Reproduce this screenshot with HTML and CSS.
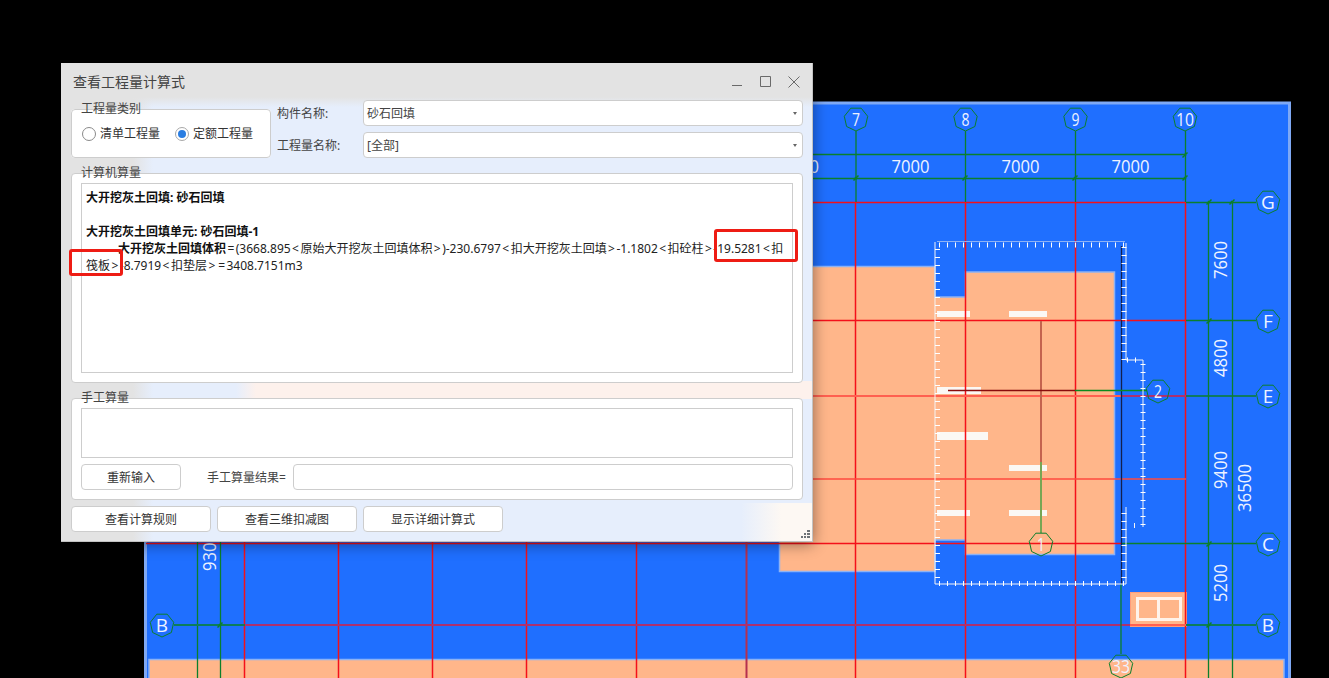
FILE: index.html
```html
<!DOCTYPE html>
<html lang="zh-CN">
<head>
<meta charset="utf-8">
<title>查看工程量计算式</title>
<link rel="stylesheet" href="styles.css">
</head>
<body>
<svg class="cad" width="1329" height="678" viewBox="0 0 1329 678" xmlns="http://www.w3.org/2000/svg">
  <defs>
    <polygon id="hept" points="0,12 -9.4,7.5 -11.7,-2.7 -5.2,-10.8 5.2,-10.8 11.7,-2.7 9.4,7.5"/>
    <path id="tick" d="M-2.5 2.5 L2.5 -2.5 M-1 -1 L1 1"/>
  </defs>
  <rect class="panel" x="145.500" y="103" width="1144" height="580"/>
  <path class="peach" d="M779.500 266.500 V571.500 H935 V540 H965.500 V554.500 H1114.500 V272 H965.500 V297 H935 V266.500 Z"/>
  <rect class="peach" x="149" y="659.500" width="1135" height="24"/>
  <rect class="peach plain" x="1130.500" y="592.500" width="56" height="34"/>
  <rect class="white-outline" x="1137.500" y="598.500" width="43" height="21"/>
  <line class="white-thick" x1="1158.500" y1="598" x2="1158.500" y2="620"/>

  <rect class="wbar" x="937" y="311" width="33" height="6"/>
  <rect class="wbar" x="1009" y="311" width="38" height="6"/>
  <rect class="wbar" x="937" y="387" width="44" height="7"/>
  <rect class="wbar" x="937" y="432" width="51" height="8"/>
  <rect class="wbar" x="1009" y="465" width="38" height="6"/>
  <rect class="wbar" x="937" y="510" width="33" height="6"/>
  <rect class="wbar" x="1009" y="510" width="38" height="6"/>

  <!-- red grid -->
  <g class="red">
    <path d="M244.500 542V678 M338.500 542V678 M432.500 542V678 M526.500 542V678 M636.500 542V678"/>
    <path d="M855.500 202V678 M965.500 202V678 M1075.500 202V678 M1185.500 202V678"/>
    <path d="M146 202.500H1185 M146 320.500H1185 M146 543.500H1121"/>
  </g>
  <line class="red-soft" x1="746.500" y1="542" x2="746.500" y2="678"/>
  <line class="red-band" x1="146" y1="396" x2="1122" y2="396"/>
  <line class="purple" x1="1122" y1="396" x2="1186" y2="396"/>
  <line class="red-mid" x1="146" y1="479" x2="1186" y2="479"/>
  <line class="purple" x1="245" y1="625" x2="1186" y2="625"/>
  <line class="red-band" x1="1130" y1="625" x2="1186" y2="625"/>

  <!-- green dimension lines -->
  <g class="green">
    <path d="M856 131V202 M965.500 131V202 M1075.500 131V202 M1185.500 131V202"/>
    <path d="M813 154.500H1186 M813 178.500H1186"/>
    <path d="M1186 202.500H1256 M1186 320.500H1256 M1186 396H1256 M1121 543.500H1256"/>
    <path d="M1208.500 202V678 M1232.500 202V678"/>
    <path d="M197.500 542V678 M220.500 542V678"/>
    <path d="M1121 584V654"/>
  </g>
  <line class="green-thick" x1="1186" y1="625" x2="1256" y2="625"/>
  <line class="green-thick" x1="174" y1="625" x2="245" y2="625"/>
  <line class="dark" x1="1121.500" y1="246" x2="1121.500" y2="584"/>
  <line class="brown" x1="1041" y1="321" x2="1041" y2="462"/>
  <line class="olive" x1="1041" y1="462" x2="1041" y2="533"/>
  <line class="maroon" x1="948" y1="390.500" x2="1075" y2="390.500"/>
  <line class="green-line" x1="1075" y1="390.500" x2="1147" y2="390.500"/>

  <g class="mark">
    <use href="#tick" x="856" y="178"/><use href="#tick" x="965" y="178"/><use href="#tick" x="1075" y="178"/>
    <use href="#tick" x="1185" y="155"/><use href="#tick" x="1185" y="178"/>
    <use href="#tick" x="1209" y="202"/><use href="#tick" x="1232" y="202"/>
    <use href="#tick" x="1209" y="321"/><use href="#tick" x="1209" y="544"/><use href="#tick" x="1209" y="625"/>
    <use href="#tick" x="220" y="625"/>
  </g>

  <!-- pit outline -->
  <g class="hatch-line">
    <path d="M935 242V584 H1126 M1126 507V584 M1126 243V360 H1143 V527 M1134.500 523V528"/>
  </g>
  <path class="hatch-top" d="M937 241.500H1125"/>
  <g class="hatch">
    <path d="M937.500 249V582"/>
    <path d="M1124 247V360"/>
    <path d="M1124 513V582"/>
    <path d="M1143 364V526"/>
  </g>
  <g class="hatch-v">
    <path d="M939 245H1125"/>
    <path d="M939 583.500H1125"/>
    <path d="M1127 360H1143"/>
  </g>

  <!-- axis bubbles -->
  <g class="bubble">
    <use href="#hept" x="856" y="119"/><use href="#hept" x="965.500" y="119"/><use href="#hept" x="1075.500" y="119"/><use href="#hept" x="1185" y="119"/>
    <use href="#hept" x="1268" y="202"/><use href="#hept" x="1268" y="321"/><use href="#hept" x="1268" y="396"/><use href="#hept" x="1268" y="544"/><use href="#hept" x="1268" y="625"/>
    <use href="#hept" x="162" y="625"/><use href="#hept" x="1041" y="544"/><use href="#hept" x="1158" y="391"/><use href="#hept" x="1121" y="666"/>
  </g>
  <g class="label">
    <text x="856" y="126" textLength="8" lengthAdjust="spacingAndGlyphs">7</text>
    <text x="965.500" y="126" textLength="8" lengthAdjust="spacingAndGlyphs">8</text>
    <text x="1075.500" y="126" textLength="8" lengthAdjust="spacingAndGlyphs">9</text>
    <text x="1185" y="126" textLength="18" lengthAdjust="spacingAndGlyphs">10</text>
    <text x="1268" y="209">G</text><text x="1268" y="328">F</text><text x="1268" y="403">E</text><text x="1268" y="551">C</text><text x="1268" y="632">B</text>
    <text x="162" y="632">B</text>
    <text x="1041" y="551" textLength="8" lengthAdjust="spacingAndGlyphs">1</text>
    <text x="1158" y="398" textLength="8" lengthAdjust="spacingAndGlyphs">2</text>
    <text x="1121" y="673" textLength="18" lengthAdjust="spacingAndGlyphs">33</text>
    <text x="800" y="173" textLength="38" lengthAdjust="spacingAndGlyphs">7000</text>
    <text x="910.500" y="173" textLength="38" lengthAdjust="spacingAndGlyphs">7000</text>
    <text x="1020.500" y="173" textLength="38" lengthAdjust="spacingAndGlyphs">7000</text>
    <text x="1130.500" y="173" textLength="38" lengthAdjust="spacingAndGlyphs">7000</text>
    <text transform="translate(1227 260) rotate(-90)" textLength="38" lengthAdjust="spacingAndGlyphs">7600</text>
    <text transform="translate(1227 358) rotate(-90)" textLength="38" lengthAdjust="spacingAndGlyphs">4800</text>
    <text transform="translate(1227 470) rotate(-90)" textLength="38" lengthAdjust="spacingAndGlyphs">9400</text>
    <text transform="translate(1227 583) rotate(-90)" textLength="38" lengthAdjust="spacingAndGlyphs">5200</text>
    <text transform="translate(1251 488) rotate(-90)" textLength="48" lengthAdjust="spacingAndGlyphs">36500</text>
    <text transform="translate(216 552) rotate(-90)" textLength="38" lengthAdjust="spacingAndGlyphs">9300</text>
  </g>
</svg>

<main class="dialog">
  <header class="titlebar">
    <h1 class="title">查看工程量计算式</h1>
    <div class="winctl">
      <svg width="11" height="11" viewBox="0 0 11 11"><path d="M0 9.500H10"/></svg>
      <svg width="11" height="11" viewBox="0 0 11 11"><path d="M.5 .5H10.500V10.500H.5Z"/></svg>
      <svg width="12" height="12" viewBox="0 0 12 12"><path d="M.5 .5L11.500 11.500M11.500 .5L.5 11.500"/></svg>
    </div>
  </header>

  <section class="top-row">
    <fieldset class="group group-type">
      <span class="legend">工程量类别</span>
      <label class="radio"><span class="dot"></span>清单工程量</label>
      <label class="radio"><span class="dot on"></span>定额工程量</label>
    </fieldset>
    <div class="fields">
      <div class="field"><span class="field-label">构件名称:</span><div class="combo">砂石回填<span class="arrow"></span></div></div>
      <div class="field"><span class="field-label">工程量名称:</span><div class="combo">[全部]<span class="arrow"></span></div></div>
    </div>
  </section>

  <section class="group group-calc">
    <span class="legend">计算机算量</span>
    <div class="memo calc-text">
      <div class="b">大开挖灰土回填: 砂石回填</div>
      <div class="blank"></div>
      <div class="b">大开挖灰土回填单元: 砂石回填-1</div>
      <div class="indent"><span class="b">大开挖灰土回填体积</span><span class="op">=</span>(3668.895<span class="op">&lt;</span>原始大开挖灰土回填体积<span class="op">&gt;</span>)-230.6797<span class="op">&lt;</span>扣大开挖灰土回填<span class="op">&gt;</span>-1.1802<span class="op">&lt;</span>扣砼柱<span class="op">&gt;</span>-19.5281<span class="op">&lt;</span>扣</div>
      <div>筏板<span class="op">&gt;</span>-8.7919<span class="op">&lt;</span>扣垫层<span class="op">&gt;</span><span class="op">=</span>3408.7151m3</div>
    </div>
  </section>

  <section class="group group-manual">
    <span class="legend">手工算量</span>
    <div class="memo manual-memo"></div>
    <div class="manual-row">
      <button class="btn btn-retype">重新输入</button>
      <span class="result-label">手工算量结果=</span>
      <div class="result-input"></div>
    </div>
  </section>

  <footer class="actions">
    <button class="btn btn-wide">查看计算规则</button>
    <button class="btn btn-wide">查看三维扣减图</button>
    <button class="btn btn-wide">显示详细计算式</button>
  </footer>

  <svg class="grip" width="9" height="9" viewBox="0 0 9 9"><path d="M6 0h3v2H6zM3 3h2v2H3zM6 3h3v2H6zM0 6h2v2H0zM3 6h2v2H3zM6 6h3v2H6z"/></svg>
  <span class="callout callout-a"></span>
  <span class="callout callout-b"></span>
</main>
</body>
</html>
```
FILE: styles.css
```css
html, body { margin: 0; padding: 0; }
body {
  position: relative;
  width: 1329px;
  height: 678px;
  overflow: hidden;
  background: #000;
  font-family: "Noto Sans", "Noto Sans CJK SC", sans-serif;
}

/* CAD drawing */
.cad { position: absolute; left: 0; top: 0; display: block; }
.panel { fill: #1f6fff; stroke: #7fa9f5; stroke-width: 3; }
.peach { fill: #ffb68a; stroke: #8db2f5; stroke-width: 1.5; }
.peach.plain { stroke: #ff9d7a; stroke-width: 1; }
.white-outline { fill: none; stroke: #fff3ea; stroke-width: 3; }
.white-thick { stroke: #fff3ea; stroke-width: 3; }
.wbar { fill: #fbf8f4; }
.red path { fill: none; stroke: #f4101a; stroke-width: 1.5; }
.red-soft { stroke: #b5304f; stroke-width: 2; }
.red-band { stroke: #ff6050; stroke-width: 2; }
.red-mid { stroke: #ff4a3e; stroke-width: 1.5; }
.purple { stroke: #ad3070; stroke-width: 2; }
.green path { fill: none; stroke: #0b7f2c; stroke-width: 1.3; }
.green-thick { stroke: #0c7d5a; stroke-width: 2; }
.green-line { stroke: #0b8a1e; stroke-width: 1.3; }
.dark { stroke: #13204d; stroke-width: 1.3; }
.brown { stroke: #c4634e; stroke-width: 2; }
.olive { stroke: #77a654; stroke-width: 2; }
.maroon { stroke: #8a0c0c; stroke-width: 1.3; }
.mark { fill: none; stroke: #0b7f2c; stroke-width: 1.5; }
.bubble { fill: none; stroke: #0b7f2c; stroke-width: 1; }
.hatch-line path { fill: none; stroke: #f4f4f4; stroke-width: 1; }
.hatch-top { fill: none; stroke: #8db2f5; stroke-width: 1; }
.hatch path { fill: none; stroke: #fff; stroke-width: 5; stroke-dasharray: 1 7; }
.hatch-v path { fill: none; stroke: #fff; stroke-width: 5; stroke-dasharray: 1 7; }
.label { fill: #eef3ff; font-family: "Open Sans", "Noto Sans", sans-serif; font-size: 19px; text-anchor: middle; }

/* Dialog */
.dialog {
  position: absolute;
  left: 61px;
  top: 63px;
  box-sizing: border-box;
  width: 752px;
  height: 479px;
  padding: 0 10px;
  display: flex;
  flex-direction: column;
  color: #333;
  font-size: 12px;
  line-height: 17px;
  box-shadow: inset -1px -1px 0 #c2c2c2, 0 2px 14px rgba(0, 0, 0, .45);
  background:
    linear-gradient(180deg, #e3e3e3 0, #e3e3e3 34px, rgba(227,227,227,0) 44px),
    linear-gradient(90deg, #e3e3e3 0, #e3e3e3 72px, rgba(227,227,227,0) 92px),
    linear-gradient(90deg, rgba(253,241,236,0) 175px, #fdf1ec 195px) 0 318px / 100% 18px no-repeat,
    linear-gradient(90deg, rgba(255,250,245,0) 680px, #fdf8f3 720px) 0 440px / 100% 39px no-repeat,
    #e6eefc;
}
.titlebar {
  flex: 0 0 37px;
  height: 37px;
  display: flex;
  justify-content: space-between;
  align-items: flex-start;
  padding: 10px 3px 0 2px;
  box-sizing: border-box;
}
.title { margin: 0; font-size: 14px; font-weight: 400; line-height: 17px; color: #444; }
.winctl { display: flex; gap: 17px; align-items: flex-start; margin-top: 3px; }
.winctl svg { display: block; fill: none; stroke: #6a6a6a; stroke-width: 1; }

.top-row { display: flex; flex: 0 0 58px; gap: 6px; }
.group {
  position: relative;
  margin: 0;
  box-sizing: border-box;
  background: #fff;
  border: 1px solid #cdcdcd;
  border-radius: 4px;
}
.legend {
  position: absolute;
  left: 9px;
  top: -8px;
  color: #444;
  line-height: 14px;
}
.group-type {
  flex: 0 0 200px;
  height: 49px;
  margin-top: 9px;
  min-width: 0;
  padding: 15px 0 0 10px;
  display: flex;
  gap: 15px;
  align-items: flex-start;
}
.radio { display: flex; align-items: center; gap: 4px; height: 17px; color: #333; }
.dot {
  box-sizing: border-box;
  width: 14px;
  height: 14px;
  border: 1px solid #8a8a8a;
  border-radius: 50%;
  background: #fff;
  display: flex;
  align-items: center;
  justify-content: center;
}
.dot.on { border-color: #a8a8a8; }
.dot.on::after { content: ""; width: 8px; height: 8px; border-radius: 50%; background: #2a7de1; }
.fields { flex: 1; display: flex; flex-direction: column; gap: 6px; }
.field { display: flex; height: 26px; align-items: center; }
.field-label { flex: 0 0 86px; color: #444; }
.combo {
  flex: 1;
  height: 26px;
  box-sizing: border-box;
  background: #fff;
  border: 1px solid #cdcdcd;
  border-radius: 4px;
  padding: 4px 0 0 3px;
  color: #444;
  position: relative;
}
.arrow {
  position: absolute;
  right: 5px;
  top: 11px;
  width: 0;
  height: 0;
  border-left: 2.5px solid transparent;
  border-right: 2.5px solid transparent;
  border-top: 3px solid #666;
}

.group-calc { flex: 0 0 210px; margin-top: 15px; padding: 9px; }
.memo { box-sizing: border-box; background: #fff; border: 1px solid #cdcdcd; }
.calc-text {
  height: 190px;
  padding: 5px 0 0 4px;
  white-space: nowrap;
  color: #222;
  overflow: hidden;
}
.b { font-weight: 700; color: #111; }
.blank { height: 17px; }
.indent { padding-left: 32px; }
.op { padding: 0 1.45px; }

.group-manual { flex: 0 0 102px; margin-top: 15px; padding: 9px; }
.manual-memo { height: 50px; }
.manual-row { display: flex; align-items: center; margin-top: 6px; height: 26px; }
.btn {
  box-sizing: border-box;
  height: 26px;
  padding: 0;
  background: #fff;
  border: 1px solid #cdcdcd;
  border-radius: 4px;
  font: inherit;
  color: #333;
}
.btn-retype { flex: 0 0 100px; }
.result-label { flex: 0 0 86px; margin-left: 26px; color: #444; white-space: nowrap; }
.result-input {
  flex: 1;
  height: 26px;
  box-sizing: border-box;
  background: #fff;
  border: 1px solid #cdcdcd;
  border-radius: 4px;
}
.actions { flex: 0 0 26px; display: flex; gap: 6px; margin-top: 6px; }
.btn-wide { flex: 0 0 140px; }

.grip { position: absolute; right: 3px; bottom: 3px; fill: #6f7377; }
.callout {
  position: absolute;
  box-sizing: border-box;
  border: 3px solid #ee1c14;
  border-radius: 3px;
}
.callout-a { left: 8px; top: 186px; width: 54px; height: 27px; }
.callout-b { left: 653px; top: 166px; width: 84px; height: 33px; }
```
